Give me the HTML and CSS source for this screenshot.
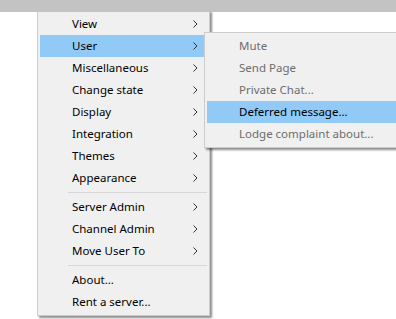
FILE: index.html
```html
<!DOCTYPE html>
<html lang="en">
<head>
    <meta charset="UTF-8">
    <title>Context Menu</title>
    <link rel="stylesheet" href="styles.css">
</head>
<body>
    <div class="top-bar"></div>
    <div class="canvas">
        <!-- Main popup menu -->
        <ul class="menu main-menu">
            <li class="item has-sub">View <svg class="chev" viewBox="0 0 5 8"><polyline points="0.5,0.5 4,4 0.5,7.5"/></svg></li>
            <li class="item has-sub active">User <svg class="chev" viewBox="0 0 5 8"><polyline points="0.5,0.5 4,4 0.5,7.5"/></svg></li>
            <li class="item has-sub">Miscellaneous <svg class="chev" viewBox="0 0 5 8"><polyline points="0.5,0.5 4,4 0.5,7.5"/></svg></li>
            <li class="item has-sub">Change state <svg class="chev" viewBox="0 0 5 8"><polyline points="0.5,0.5 4,4 0.5,7.5"/></svg></li>
            <li class="item has-sub">Display <svg class="chev" viewBox="0 0 5 8"><polyline points="0.5,0.5 4,4 0.5,7.5"/></svg></li>
            <li class="item has-sub">Integration <svg class="chev" viewBox="0 0 5 8"><polyline points="0.5,0.5 4,4 0.5,7.5"/></svg></li>
            <li class="item has-sub">Themes <svg class="chev" viewBox="0 0 5 8"><polyline points="0.5,0.5 4,4 0.5,7.5"/></svg></li>
            <li class="item has-sub">Appearance <svg class="chev" viewBox="0 0 5 8"><polyline points="0.5,0.5 4,4 0.5,7.5"/></svg></li>
            <li class="sep"></li>
            <li class="item has-sub">Server Admin <svg class="chev" viewBox="0 0 5 8"><polyline points="0.5,0.5 4,4 0.5,7.5"/></svg></li>
            <li class="item has-sub">Channel Admin <svg class="chev" viewBox="0 0 5 8"><polyline points="0.5,0.5 4,4 0.5,7.5"/></svg></li>
            <li class="item has-sub">Move User To <svg class="chev" viewBox="0 0 5 8"><polyline points="0.5,0.5 4,4 0.5,7.5"/></svg></li>
            <li class="sep"></li>
            <li class="item">About...</li>
            <li class="item">Rent a server...</li>
        </ul>

        <!-- User submenu -->
        <ul class="menu sub-menu">
            <li class="item disabled">Mute</li>
            <li class="item disabled">Send Page</li>
            <li class="item disabled">Private Chat...</li>
            <li class="item active">Deferred message...</li>
            <li class="item disabled">Lodge complaint about...</li>
        </ul>
    </div>
</body>
</html>
```

FILE: styles.css
```css
:root {
    --menu-bg: #f0f0f0;
    --menu-border: #cccccc;
    --highlight: #91c9f7;
    --disabled: #6d6d6d;
}

html, body {
    margin: 0;
    padding: 0;
    height: 100%;
    overflow: hidden;
    background: #ffffff;
    font-family: 'Noto Sans', 'Open Sans', sans-serif;
    font-size: 11.5px;
    color: #000000;
}

.top-bar {
    height: 12px;
    background: #c3c3c3;
}

/* popups are clipped by the window edge */
.canvas {
    position: relative;
    height: calc(100% - 12px);
    overflow: hidden;
}

.menu {
    list-style: none;
    margin: 0;
    padding: 2px;
    background: var(--menu-bg);
    border: 1px solid var(--menu-border);
    box-shadow: 2px 2px 2px rgba(0, 0, 0, 0.45);
    position: absolute;
}

.main-menu {
    left: 37px;
    top: -2px;
    width: 167px;
}

.sub-menu {
    left: 204px;
    top: 20px;
    width: 220px;
}

.item {
    height: 22px;
    line-height: 22px;
    padding-left: 32px;
    display: flex;
    align-items: center;
    justify-content: space-between;
    white-space: nowrap;
}

.item.active {
    background: var(--highlight);
}

.item.disabled {
    color: var(--disabled);
}

.chev {
    width: 5px;
    height: 8px;
    margin-right: 9px;
    fill: none;
    stroke: #333333;
    stroke-width: 1;
}

.sep {
    height: 1px;
    margin: 3px 0 3px 28px;
    background: #d7d7d7;
}
```
